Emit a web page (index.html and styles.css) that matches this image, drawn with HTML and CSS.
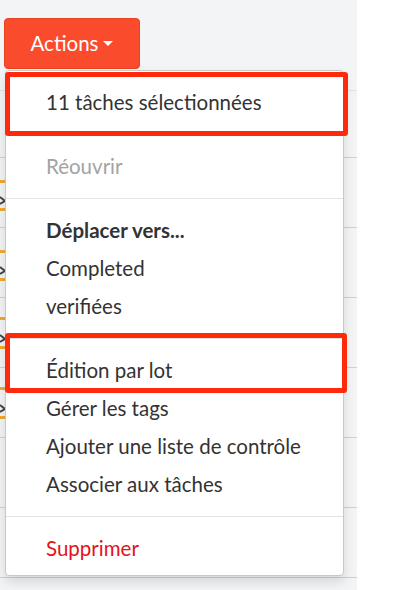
FILE: index.html
```html
<!DOCTYPE html>
<html lang="fr">
<head>
    <meta charset="UTF-8">
    <meta name="viewport" content="width=device-width, initial-scale=1.0">
    <title>Actions</title>
    <link rel="stylesheet" href="styles.css">
</head>
<body>
    <div class="page">
        <div class="toolbar">
            <div class="dropdown">
                <button class="btn-actions" type="button">Actions <span class="caret"></span></button>
                <ul class="dropdown-menu">
                    <li class="menu-header">11 tâches sélectionnées</li>
                    <li class="divider"></li>
                    <li class="disabled">Réouvrir</li>
                    <li class="divider"></li>
                    <li class="menu-title">Déplacer vers...</li>
                    <li>Completed</li>
                    <li>verifiées</li>
                    <li class="divider"></li>
                    <li>Édition par lot</li>
                    <li>Gérer les tags</li>
                    <li>Ajouter une liste de contrôle</li>
                    <li>Associer aux tâches</li>
                    <li class="divider"></li>
                    <li class="danger">Supprimer</li>

                    <!-- annotation boxes -->
                    <span class="highlight highlight-top"></span>
                    <span class="highlight highlight-batch"></span>
                </ul>
            </div>
        </div>

        <!-- task list behind the menu -->
        <div class="task-list">
            <div class="task-row first"></div>
            <div class="task-row"><svg class="mark" width="6" height="69"><rect x="0" y="22" width="5" height="3" fill="#f0a830"/><path d="M0 39 L5 43 L0 46" stroke="#444" stroke-width="2" fill="none"/><rect x="0" y="50" width="5" height="3" fill="#f0a830"/></svg></div>
            <div class="task-row"><svg class="mark" width="6" height="69"><rect x="0" y="22" width="5" height="3" fill="#f0a830"/><path d="M0 39 L5 43 L0 46" stroke="#444" stroke-width="2" fill="none"/><rect x="0" y="50" width="5" height="3" fill="#f0a830"/></svg></div>
            <div class="task-row"><svg class="mark" width="6" height="69"><rect x="0" y="19" width="5" height="3" fill="#f0a830"/><path d="M0 37 L5 41 L0 44" stroke="#444" stroke-width="2" fill="none"/><rect x="0" y="48" width="5" height="3" fill="#f0a830"/></svg></div>
            <div class="task-row"><svg class="mark" width="6" height="69"><rect x="0" y="19" width="5" height="3" fill="#f0a830"/><path d="M0 37 L5 41 L0 44" stroke="#444" stroke-width="2" fill="none"/><rect x="0" y="48" width="5" height="3" fill="#f0a830"/></svg></div>
            <div class="task-row"></div>
            <div class="task-row"></div>
        </div>
    </div>
</body>
</html>
```

FILE: styles.css
```css
/* Base */
body {
    margin: 0;
    padding: 0;
    background: #ffffff;
    font-family: 'Lato', 'Liberation Sans', sans-serif;
    color: #333;
}

.page {
    width: 357px;
    height: 590px;
    background: #f3f4f6;
    overflow: hidden;
}

/* Toolbar */
.toolbar {
    padding: 18px 0 0 4px;
}

.dropdown {
    position: relative;
}

.btn-actions {
    display: flex;
    align-items: center;
    justify-content: center;
    width: 136px;
    height: 51px;
    padding: 0 0 2px;
    background: #fa4b2d;
    border: 1px solid #ea4224;
    border-radius: 4px;
    color: #fff;
    font-family: 'Lato', 'Liberation Sans', sans-serif;
    font-size: 20.5px;
}

.caret {
    width: 0;
    height: 0;
    margin-left: 5px;
    margin-top: 2px;
    border-top: 5px solid #fff;
    border-left: 5px solid transparent;
    border-right: 5px solid transparent;
}

/* Dropdown menu */
.dropdown-menu {
    position: absolute;
    top: 52px;
    left: 1px;
    z-index: 10;
    width: 337px;
    margin: 0;
    padding: 13px 0 7px;
    list-style: none;
    background: #fff;
    border: 1px solid #c8c8c8;
    border-radius: 4px;
    box-shadow: 0 6px 12px rgba(0, 0, 0, 0.12);
}

.dropdown-menu li {
    height: 38px;
    line-height: 37px;
    padding-left: 40px;
    font-size: 20.5px;
    white-space: nowrap;
}

.dropdown-menu li.divider {
    height: 1px;
    margin: 12px 0 13px;
    padding: 0;
    background: #e3e3e3;
}

.dropdown-menu .disabled {
    color: #a3a3a3;
}

.dropdown-menu .menu-title {
    font-weight: bold;
}

.dropdown-menu .danger {
    color: #e2141b;
}

/* Red annotation boxes */
.highlight {
    position: absolute;
    left: -1px;
    border: 5px solid #ff2a0c;
    border-radius: 3px;
}

.highlight-top {
    top: 1px;
    width: 333px;
    height: 54px;
}

.highlight-batch {
    top: 262px;
    width: 332px;
    height: 50px;
}

/* Task list */
.task-list {
    margin-top: 21px;
    border-top: 1px solid #e1e2e4;
}

.task-row {
    height: 69px;
    border-bottom: 1px solid #cfd0d2;
}

.task-row.first {
    height: 66px;
}

.mark {
    display: block;
}
```
